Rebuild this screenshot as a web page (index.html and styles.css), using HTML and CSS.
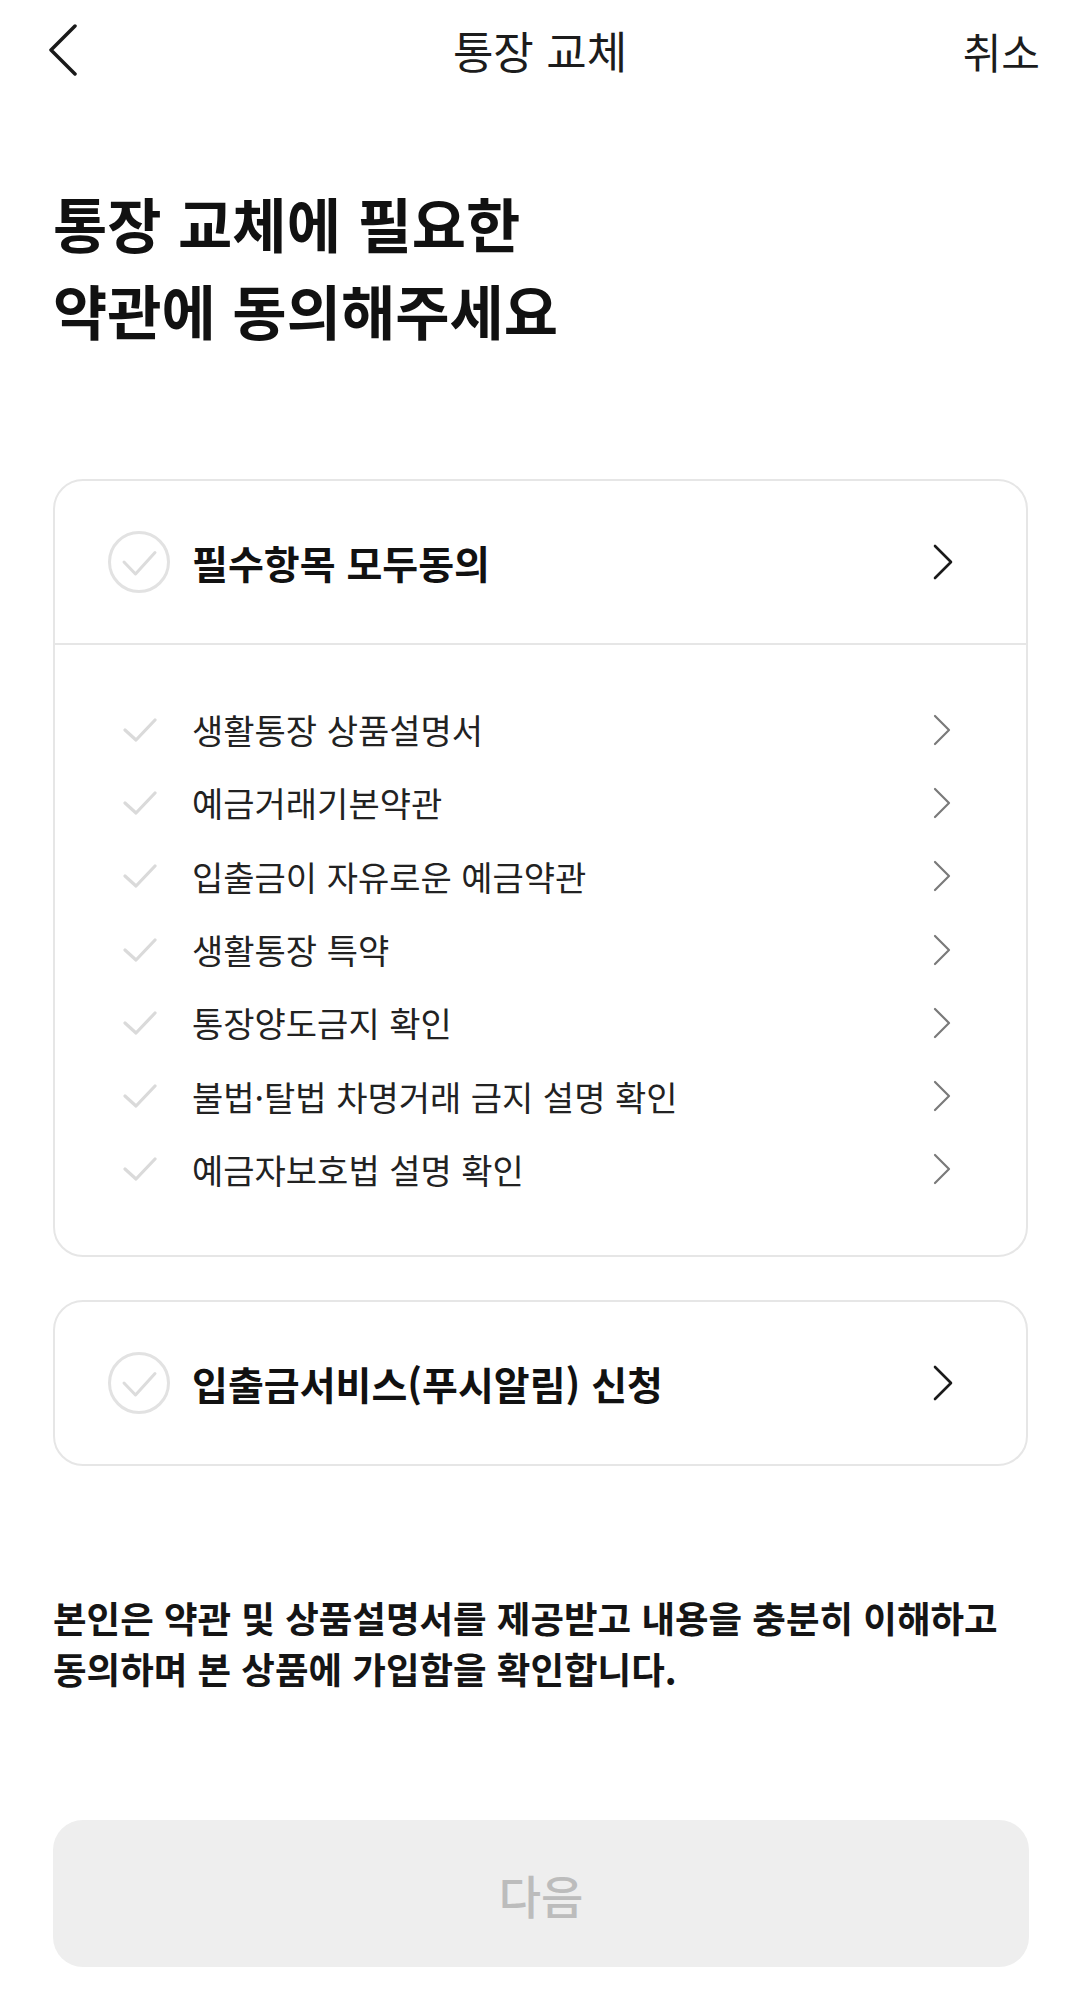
FILE: index.html
```html
<!DOCTYPE html>
<html lang="ko">
<head>
    <meta charset="UTF-8">
    <meta name="viewport" content="width=device-width, initial-scale=1.0">
    <title>통장 교체</title>
    <link rel="stylesheet" href="styles.css">
</head>
<body>
    <!-- Top bar -->
    <header class="topbar">
        <a href="#" class="back-btn" aria-label="뒤로">
            <svg width="30" height="52" viewBox="0 0 30 52">
                <polyline points="27,2 3,26 27,50" fill="none" stroke="#1a1a1a" stroke-width="3.5" stroke-linecap="round" stroke-linejoin="round"/>
            </svg>
        </a>
        <div class="topbar-title">통장 교체</div>
        <a href="#" class="cancel-btn">취소</a>
    </header>

    <h1 class="page-title">통장 교체에 필요한<br>약관에 동의해주세요</h1>

    <!-- Required terms -->
    <section class="card">
        <div class="card-head">
            <svg class="check-circle" width="64" height="64" viewBox="0 0 64 64">
                <circle cx="32" cy="32" r="29.5" fill="none" stroke="#e2e2e2" stroke-width="3"/>
                <polyline points="17,32 28.5,44 48,22.5" fill="none" stroke="#dcdcdc" stroke-width="3" stroke-linecap="round" stroke-linejoin="round"/>
            </svg>
            <span class="card-head-text">필수항목 모두동의</span>
            <svg class="chevron" width="22" height="36" viewBox="0 0 22 36">
                <polyline points="3,2 19,18 3,34" fill="none" stroke="#1a1a1a" stroke-width="2.6" stroke-linecap="round" stroke-linejoin="round"/>
            </svg>
        </div>
        <ul class="term-list">
            <li class="term">
                <svg class="check" width="34" height="24" viewBox="0 0 34 24"><polyline points="2,12 13,22 32,2" fill="none" stroke="#dadada" stroke-width="3.2" stroke-linecap="round" stroke-linejoin="round"/></svg>
                <span class="term-text">생활통장 상품설명서</span>
                <svg class="chevron-sm" width="20" height="32" viewBox="0 0 20 32"><polyline points="3,2 17,16 3,30" fill="none" stroke="#7a7a7a" stroke-width="2.2" stroke-linecap="round" stroke-linejoin="round"/></svg>
            </li>
            <li class="term">
                <svg class="check" width="34" height="24" viewBox="0 0 34 24"><polyline points="2,12 13,22 32,2" fill="none" stroke="#dadada" stroke-width="3.2" stroke-linecap="round" stroke-linejoin="round"/></svg>
                <span class="term-text">예금거래기본약관</span>
                <svg class="chevron-sm" width="20" height="32" viewBox="0 0 20 32"><polyline points="3,2 17,16 3,30" fill="none" stroke="#7a7a7a" stroke-width="2.2" stroke-linecap="round" stroke-linejoin="round"/></svg>
            </li>
            <li class="term">
                <svg class="check" width="34" height="24" viewBox="0 0 34 24"><polyline points="2,12 13,22 32,2" fill="none" stroke="#dadada" stroke-width="3.2" stroke-linecap="round" stroke-linejoin="round"/></svg>
                <span class="term-text">입출금이 자유로운 예금약관</span>
                <svg class="chevron-sm" width="20" height="32" viewBox="0 0 20 32"><polyline points="3,2 17,16 3,30" fill="none" stroke="#7a7a7a" stroke-width="2.2" stroke-linecap="round" stroke-linejoin="round"/></svg>
            </li>
            <li class="term">
                <svg class="check" width="34" height="24" viewBox="0 0 34 24"><polyline points="2,12 13,22 32,2" fill="none" stroke="#dadada" stroke-width="3.2" stroke-linecap="round" stroke-linejoin="round"/></svg>
                <span class="term-text">생활통장 특약</span>
                <svg class="chevron-sm" width="20" height="32" viewBox="0 0 20 32"><polyline points="3,2 17,16 3,30" fill="none" stroke="#7a7a7a" stroke-width="2.2" stroke-linecap="round" stroke-linejoin="round"/></svg>
            </li>
            <li class="term">
                <svg class="check" width="34" height="24" viewBox="0 0 34 24"><polyline points="2,12 13,22 32,2" fill="none" stroke="#dadada" stroke-width="3.2" stroke-linecap="round" stroke-linejoin="round"/></svg>
                <span class="term-text">통장양도금지 확인</span>
                <svg class="chevron-sm" width="20" height="32" viewBox="0 0 20 32"><polyline points="3,2 17,16 3,30" fill="none" stroke="#7a7a7a" stroke-width="2.2" stroke-linecap="round" stroke-linejoin="round"/></svg>
            </li>
            <li class="term">
                <svg class="check" width="34" height="24" viewBox="0 0 34 24"><polyline points="2,12 13,22 32,2" fill="none" stroke="#dadada" stroke-width="3.2" stroke-linecap="round" stroke-linejoin="round"/></svg>
                <span class="term-text">불법·탈법 차명거래 금지 설명 확인</span>
                <svg class="chevron-sm" width="20" height="32" viewBox="0 0 20 32"><polyline points="3,2 17,16 3,30" fill="none" stroke="#7a7a7a" stroke-width="2.2" stroke-linecap="round" stroke-linejoin="round"/></svg>
            </li>
            <li class="term">
                <svg class="check" width="34" height="24" viewBox="0 0 34 24"><polyline points="2,12 13,22 32,2" fill="none" stroke="#dadada" stroke-width="3.2" stroke-linecap="round" stroke-linejoin="round"/></svg>
                <span class="term-text">예금자보호법 설명 확인</span>
                <svg class="chevron-sm" width="20" height="32" viewBox="0 0 20 32"><polyline points="3,2 17,16 3,30" fill="none" stroke="#7a7a7a" stroke-width="2.2" stroke-linecap="round" stroke-linejoin="round"/></svg>
            </li>
        </ul>
    </section>

    <!-- Optional service -->
    <section class="card card-single">
        <div class="card-head">
            <svg class="check-circle" width="64" height="64" viewBox="0 0 64 64">
                <circle cx="32" cy="32" r="29.5" fill="none" stroke="#e2e2e2" stroke-width="3"/>
                <polyline points="17,32 28.5,44 48,22.5" fill="none" stroke="#dcdcdc" stroke-width="3" stroke-linecap="round" stroke-linejoin="round"/>
            </svg>
            <span class="card-head-text">입출금서비스(푸시알림) 신청</span>
            <svg class="chevron" width="22" height="36" viewBox="0 0 22 36">
                <polyline points="3,2 19,18 3,34" fill="none" stroke="#1a1a1a" stroke-width="2.6" stroke-linecap="round" stroke-linejoin="round"/>
            </svg>
        </div>
    </section>

    <p class="notice">본인은 약관 및 상품설명서를 제공받고 내용을 충분히 이해하고<br>동의하며 본 상품에 가입함을 확인합니다.</p>

    <button type="button" class="next-btn" disabled>다음</button>
</body>
</html>
```

FILE: styles.css
```css
body {
    margin: 0;
    width: 1080px;
    background: #ffffff;
    font-family: "Noto Sans CJK KR", "Noto Sans", sans-serif;
    color: #111111;
}
a {
    text-decoration: none;
    color: inherit;
}

/* Top bar */
.topbar {
    position: relative;
    height: 100px;
    display: flex;
    align-items: center;
    justify-content: space-between;
    padding: 0 40px 4px 48px;
}
.back-btn {
    display: flex;
    align-items: center;
}
.topbar-title {
    position: absolute; /* centered over the bar */
    left: 0;
    right: 0;
    text-align: center;
    font-size: 44px;
    color: #1c1c1c;
    pointer-events: none;
}
.cancel-btn {
    font-size: 42px;
    color: #1c1c1c;
}

.page-title {
    margin: 75px 0 0 53px;
    font-size: 59px;
    line-height: 87px;
    font-weight: 700;
    color: #111111;
}

/* Cards */
.card {
    margin: 126px 52px 0 53px;
    border: 2px solid #e6e6e6;
    border-radius: 30px;
}
.card-single {
    margin-top: 43px;
}
.card-head {
    height: 162px;
    display: flex;
    align-items: center;
    padding: 0 72px 0 52px;
}
.check-circle {
    flex: none;
}
.card-head-text {
    flex: 1;
    margin-left: 21px;
    font-size: 39px;
    font-weight: 700;
    color: #111111;
}
.chevron {
    flex: none;
}

.term-list {
    list-style: none;
    margin: 0;
    padding: 48px 0 49px;
    border-top: 2px solid #e6e6e6;
}
.term {
    height: 73.3px;
    display: flex;
    align-items: center;
    padding: 0 74px 0 68px;
}
.check {
    flex: none;
}
.term-text {
    flex: 1;
    margin-left: 35px;
    font-size: 34px;
    color: #222222;
}
.chevron-sm {
    flex: none;
}

.notice {
    margin: 126px 40px 0 53px;
    font-size: 36.5px;
    line-height: 51px;
    font-weight: 700;
    color: #151515;
}

.next-btn {
    display: block;
    width: 976px;
    height: 147px;
    margin: 126px 0 0 53px;
    border: none;
    border-radius: 30px;
    background-color: #eeeeee;
    color: #bcbcbc;
    font-family: inherit;
    font-size: 46px;
    font-weight: 500;
}
```
